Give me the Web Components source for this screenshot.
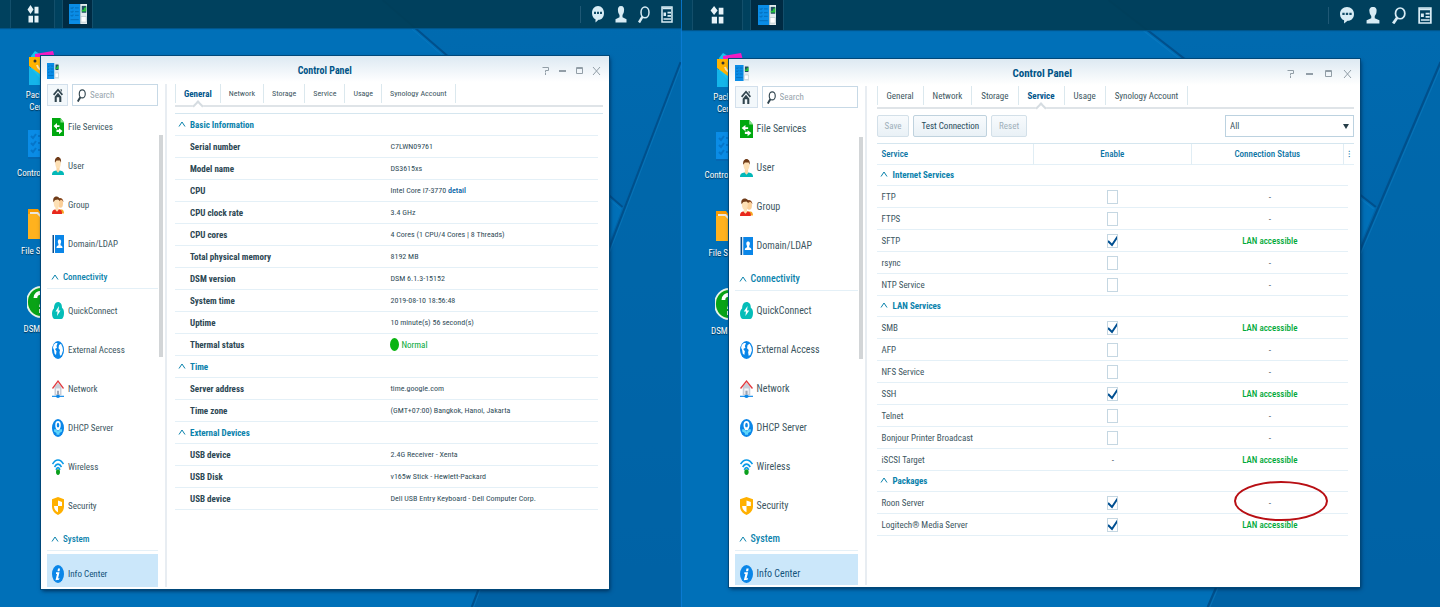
<!DOCTYPE html>
<html lang="en">
<head>
<meta charset="utf-8">
<title>Control Panel</title>
<style>
  body {
    margin: 0;
    height: 100vh;
    display: flex;
    overflow: hidden;
    font-family: "Roboto Condensed", "Open Sans", sans-serif;
    color: #3c5661;
  }
  #info {
    flex: 681;
    --text: 8px;
    --strong: 9px;
    --nav-text: 9px;
    --title: 10px;
    --bar: 28px;
    --launch: 45px;
    --app: 31px;
    --icon: 12px;
    --nav-icon: 12px;
    --tray-gap: 11px;
    --icons-width: 82px;
    --margin: 28px 72px 18px 41px;
    --side: 111px;
    --home: 21px;
    --group-gap: 2px;
    --head: 27px;
    --tab-pad: 8px;
    --control-gap: 8px;
    --main-gap: 8px;
  }
  #services {
    flex: 759;
    --text: 9px;
    --strong: 9px;
    --nav-text: 10px;
    --title: 11px;
    --bar: 30px;
    --launch: 51px;
    --app: 34px;
    --icon: 14px;
    --nav-icon: 13px;
    --tray-gap: 12px;
    --icons-width: 94px;
    --margin: 29px 80px 20px 47px;
    --side: 123px;
    --home: 23px;
    --group-gap: 0px;
    --head: 26px;
    --tab-pad: 9px;
    --control-gap: 10px;
    --main-gap: 10px;
    border-left: 1px solid #0a7ad2;
  }
</style>
</head>
<body>

<dsm-desktop id="info">
  <dsm-window>
    <dsm-tabs slot="tabs" active="General"></dsm-tabs>
    <dsm-info></dsm-info>
  </dsm-window>
</dsm-desktop>

<dsm-desktop id="services">
  <dsm-window>
    <dsm-tabs slot="tabs" active="Service"></dsm-tabs>
    <dsm-services></dsm-services>
  </dsm-window>
</dsm-desktop>

<script>
const icons = {
  menu: `<path fill="#e6f2f8" d="M7 0 13 8 7 16 1 8zM15 3h8v12h-8zM3 19h9v12H3zM15 19h8v12h-8z"/>`,
  panel: `<path fill="#0a8ce6" d="M0 0h15v32H0z"/><path fill="#e3ebee" d="M15 0h9v32h-9z"/><path stroke="#0574c4" stroke-width="2" fill="none" d="M2 6l2 1 2-2M8 6h5M2 12l2 1 2-2M8 12h5M2 18l2 1 2-2M8 18h5M2 25h11"/><path fill="#fff" stroke="#b4c6cd" d="M16 20h7v9h-7z"/><path fill="#1e4c63" d="M17 3h6v11h-6z"/><path fill="#27c43a" d="M17 9h3V6h2V4h1v8h-6z"/>`,
  chat: `<path fill="#d8ecf5" d="M12 0C5 0 0 6 0 13c0 6 3 10 7 12v6l6-5c7 0 11-6 11-13S19 0 12 0z"/><path fill="#124c68" d="M4 11h4v4H4zM10 11h4v4h-4zM16 11h4v4h-4z"/>`,
  person: `<path fill="#d8ecf5" d="M12 0c-5 0-7 4-6 9 0 4 2 6 3 8v4L1 25v6h22v-6l-8-4v-4c1-2 3-4 3-8 1-5-1-9-6-9z"/>`,
  search: `<ellipse cx="14" cy="12" rx="8" ry="10" fill="none" stroke="currentColor" stroke-width="3"/><path stroke="currentColor" stroke-width="5" d="M9 20 2 31"/>`,
  widget: `<path fill="none" stroke="#d8ecf5" stroke-width="3" d="M2 2h20v28H2z"/><path fill="#d8ecf5" d="M3 3h18v3H3zM5 12h5v7H5zM13 11h7v3h-7zM13 17h7v3h-7zM5 23h15v3H5z"/>`,
  home: `<path fill="#30444e" d="M12 1 24 14l-3 3-9-10-9 10-3-3zM18 3h3v6l-3-4z"/><path fill="#30444e" d="m12 11 8 9v12h-5V21H9v11H4V20z"/>`,
  file: `<path fill="#00a80f" d="M0 0h17l7 8v24H0z"/><path fill="#87e08b" d="M17 0v8h7z"/><path fill="#fff" d="m3 14 7-5v4h5v3h-5v4zM21 23l-7-5v3H9v4h5v4z"/>`,
  user: `<path fill="#03b8b8" d="M0 32c0-6 3-7 8-8h8c5 1 8 2 8 8z"/><path fill="#fbd6a4" d="M9 17h6v8l-3 3-3-3z"/><ellipse cx="12" cy="11" rx="5.500" ry="9" fill="#fde0b5"/><path fill="#6f3b18" d="M6 10C5 4 8 0 12 0s7 4 6 10l-2-4H9z"/>`,
  group: `<path fill="#f5a623" d="M13 24h7c3 1 4 4 4 7H13z"/><ellipse cx="17" cy="13" rx="5" ry="8" fill="#fbcf98"/><path fill="#8a4a20" d="M11 8C12 2 22 1 23 11l-3-4z"/><path fill="#e8281c" d="M0 32c0-6 3-8 7-8h6c5 0 7 2 7 8z"/><path fill="#fde0b5" d="M7 17h6v8l-3 3-3-3z"/><ellipse cx="9" cy="12" rx="5.500" ry="9" fill="#fde0b5"/><path fill="#6f3b18" d="M3 11C1 4 5 1 9 1s8 4 7 8l-4-3-6 1z"/>`,
  domain: `<path fill="#0a4d8c" d="M1 0h3v32H1z"/><path fill="#0a86e8" d="M6 0h18v32H6z"/><path fill="#fff" d="M15 8c-4 0-4 5-2 8v2c-3 1-4 2-4 5h12c0-3-1-4-4-5v-2c2-3 2-8-2-8z"/>`,
  quick: `<path fill="#05bdb8" d="M12 0c5 0 8 4 8 10 3 2 4 5 4 9 0 6-2 11-5 11H5c-3 0-5-4-5-10 0-4 2-7 4-9C4 5 7 0 12 0z"/><path fill="#fff" d="m14 7-7 10h4l-1 8 7-10h-4z"/>`,
  globe: `<ellipse cx="12" cy="16" rx="12" ry="16" fill="#0a86e8"/><path fill="#fff" d="M3 8c3-5 6-5 8-4l-2 5 1 3-4 2 3 4-1 7-3-3-1-6-2-4zM14 7l4-2 3 6 1 6-3 8-3 1-1-6 1-4-3-3z"/>`,
  network: `<path fill="#c9ced8" d="M5 12 12 5l7 7v15H5z"/><path fill="#f5f5f8" d="M8 15h8v10H8z"/><path fill="#9aa3b3" d="M10 19h4v7h-4z"/><path fill="none" stroke="#e23a3f" stroke-width="2.500" d="M1 15 12 2l11 13"/><path fill="#0a86e8" d="M0 28h24v2H0z"/><ellipse cx="12" cy="29" rx="4" ry="3" fill="#0a86e8"/>`,
  dhcp: `<ellipse cx="12" cy="16" rx="12" ry="16" fill="#0a86e8"/><ellipse cx="12" cy="11" rx="4" ry="6" fill="none" stroke="#fff" stroke-width="3"/><path fill="#fff" d="M9 15h6v5H9z"/><path fill="#5ed5fa" d="M4 18h4l4 4 4-4h4v4l-5 3v3H9v-3l-5-3z"/>`,
  wifi: `<g fill="none" stroke="#0a9ae8" stroke-width="3"><path d="M1 11C7 1 17 1 23 11M5 16c4-7 10-7 14 0M8 21c2-5 6-5 8 0"/></g><ellipse cx="12" cy="25" rx="4" ry="5" fill="#0aa01c"/>`,
  shield: `<path fill="#ffb000" d="m12 0 12 4v13c0 7-5 12-12 15C5 29 0 24 0 17V4z"/><path fill="#fff" d="M12 6v10h8V9zM4 16h8v11c-5-2-8-6-8-11z"/>`,
  info: `<ellipse cx="12" cy="16" rx="12" ry="16" fill="#0a86e8"/><path fill="#fff" d="M12 6h4l-1 5h-4zM8 13h7l-3 11 3-1-1 3-7 1 3-11H8z"/>`,
  bag: `<path fill="#18c3ef" d="M4 5 8 0l8 5v27H4z"/><path fill="#f51cc4" d="m8 3 18-3 2 7H8z"/><path fill="#ffb300" d="M2 6h26v28L2 15z"/><path fill="#14b5ea" d="M2 15l17 19H2z"/><circle cx="8" cy="10" r="1.500" fill="#333"/><path fill="none" stroke="#fbe3b0" stroke-width="2" d="M10 14c2 6 8 8 14 5"/>`,
  list: `<path fill="#0a8ce6" d="M1 1h27v29H1z"/><path stroke="#0575c9" stroke-width="2" fill="none" d="m4 7 2 2 3-4M11 7h8M4 14l2 2 3-4M11 14h8M4 21l2 2 3-4M11 21h8"/><path stroke="#0467b1" stroke-width="2" d="M1 29h27"/>`,
  folder: `<path fill="#f79a00" d="M1 2h10l3 4h14v25H1z"/><path fill="#ece7df" d="M3 5h8l3 3h14v4H3z"/><path fill="#ffb21e" d="M1 7h9l3 3h15v22H1z"/>`,
  help: `<circle cx="17" cy="16" r="15" fill="#09a316" stroke="#e8f4e8" stroke-width="2"/><path fill="none" stroke="#fff" stroke-width="4" d="M11 12c0-7 12-7 12 0 0 5-6 4-6 9M17 23v4"/>`
};

// every glyph is drawn in one box and stretched to the width of its place
const icon = (name, box = "0 0 24 32") =>
  `<svg viewBox="${box}" preserveAspectRatio="none" aria-hidden="true">${icons[name]}</svg>`;

const chevron = `<svg class="chevron" width="8" height="6" viewBox="0 0 8 6" aria-hidden="true"><path fill="none" stroke="currentColor" d="M1 5.500 4 1l3 4.500"/></svg>`;

/**
 * Wallpaper, taskbar and shortcuts; the window comes through the slot
 */
const desktopTemplate = document.createElement("template");
desktopTemplate.innerHTML = /*html*/ `
<style>
  :host {
    display: flex;
    flex-direction: column;
    position: relative;
    min-width: 0;
    box-sizing: border-box;
    background: #0070b8;
  }
  .wallpaper {
    position: absolute;
    inset: 0;
    width: 100%;
    height: 100%;
  }
  header {
    position: relative;
    display: flex;
    align-items: center;
    height: var(--bar);
    padding: 0 8px 0 10px;
    background: rgba(0, 62, 88, 0.95);
    box-shadow: 0 1px 1px #00568c;
  }
  button {
    border: 0;
    padding: 0;
    background: none;
    color: inherit;
    display: flex;
    justify-content: center;
    align-items: center;
  }
  header .task {
    height: 100%;
    background: #003a54;
    border: solid #134f6b;
    border-width: 0 1px;
    box-sizing: border-box;
  }
  .launch { width: var(--launch); margin-right: 7px; }
  header .app { width: var(--app); background: #002b43; }
  .launch svg { width: var(--icon); height: 18px; }
  .app svg { width: 18px; height: 20px; }
  .tray {
    display: flex;
    gap: var(--tray-gap);
    margin-left: auto;
    padding-left: 11px;
    color: #d8ecf5;
    border-left: 1px solid #1f5875;
  }
  .tray svg { width: var(--icon); height: 17px; }
  .workspace {
    position: relative;
    flex: 1;
    min-height: 0;
    display: flex;
  }
  .shortcuts {
    position: absolute;
    top: 23px;
    left: 0;
    width: var(--icons-width);
    display: flex;
    flex-direction: column;
    align-items: center;
    color: #fff;
    font-size: 9px;
    line-height: 12px;
    text-align: center;
    text-shadow: 0 1px 1px #00304f;
  }
  .shortcuts div { height: 78px; width: 48px; }
  .shortcuts svg { display: block; width: 28px; height: 34px; margin: 0 auto 4px; }
  slot { display: flex; flex: 1; min-width: 0; }
</style>

<svg class="wallpaper" viewBox="0 0 681 607" preserveAspectRatio="none" aria-hidden="true">
  <defs>
    <linearGradient id="shade" x1="0" y1="0" x2="0" y2="1">
      <stop offset="0" stop-color="#006bb0"/>
      <stop offset="1" stop-color="#005ca0"/>
    </linearGradient>
  </defs>
  <path fill="url(#shade)" d="M383 0 623 207 472 607H681V0z"/>
  <path fill="#0068a9" d="M681 62 623 208 472 607H681z" opacity=".5"/>
  <path fill="none" stroke="#00508c" stroke-width="2" d="M383 0 623 207M681 62 472 607"/>
  <path fill="none" stroke="#1080c4" d="M381 2 621 209M683 62 474 607" opacity=".5"/>
</svg>
<header>
  <button class="task launch" aria-label="Main Menu">${icon("menu")}</button>
  <button class="task app" aria-label="Control Panel">${icon("panel")}</button>
  <div class="tray">
    <button aria-label="Notifications">${icon("chat")}</button>
    <button aria-label="Options">${icon("person")}</button>
    <button aria-label="Search">${icon("search")}</button>
    <button aria-label="Widgets">${icon("widget")}</button>
  </div>
</header>
<div class="workspace">
  <div class="shortcuts">
    <div>${icon("bag", "0 0 28 34")}Package Center</div>
    <div>${icon("list", "0 0 28 34")}Control Panel</div>
    <div>${icon("folder", "0 0 28 34")}File Station</div>
    <div>${icon("help", "2 -1 30 34")}DSM Help</div>
  </div>
  <slot></slot>
</div>
`;

class DsmDesktop extends HTMLElement {
  connectedCallback() {
    this.attachShadow({ mode: "open" }).appendChild(desktopTemplate.content.cloneNode(true));
  }
}

/**
 * Control Panel window
 */
const windowTemplate = document.createElement("template");
windowTemplate.innerHTML = /*html*/ `
<style>
  :host {
    position: relative;
    display: flex;
    flex-direction: column;
    flex: 1;
    min-width: 0;
    min-height: 0;
    box-sizing: border-box;
    margin: var(--margin);
    padding: 1px 6px 2px;
    background: #fff linear-gradient(#dde9f2, #fff 26px) no-repeat;
    box-shadow: 0 0 0 1px #00487a, 1px 2px 4px #00305a;
  }
  header {
    display: flex;
    align-items: center;
    height: var(--head);
    box-sizing: border-box;
    color: #005487;
  }
  header > svg { width: var(--icon); height: 16px; }
  h1 { flex: 1; margin: 0; font-size: var(--title); text-align: center; padding-left: 50px; }
  .controls { display: flex; gap: var(--control-gap); padding-right: 2px; }
  .controls button { border: 0; padding: 0; background: none; display: flex; }
  .body { flex: 1; display: flex; min-height: 0; }
  aside {
    width: calc(var(--side) + 7px);
    display: flex;
    flex-direction: column;
    border-right: 2px solid #e8edf2;
    margin-right: var(--main-gap);
    flex: none;
    min-height: 0;
  }
  .find { display: flex; gap: 4px; width: var(--side); height: 22px; flex: none; }
  .find button {
    width: var(--home);
    padding: 0;
    border: 1px solid #d3e0ec;
    background: #f3f8fb;
    display: flex;
    align-items: center;
    justify-content: center;
    flex: none;
  }
  .find button svg { width: 10px; height: 14px; }
  .find label {
    flex: 1;
    min-width: 0;
    display: flex;
    align-items: center;
    gap: 4px;
    padding-left: 4px;
    border: 1px solid #c7d9e6;
    color: #30444e;
  }
  .find label svg { width: 9px; height: 13px; flex: none; }
  .find input {
    width: 100%;
    min-width: 0;
    padding: 0;
    border: 0;
    outline: 0;
    background: none;
    font: inherit;
    font-size: 9px;
  }
  .find input::placeholder { color: #98a5ad; }
  .scroll { display: flex; flex: 1; min-height: 0; margin-top: 1px; }
  nav { width: var(--side); overflow: hidden; }
  nav a {
    height: 39px;
    display: flex;
    align-items: center;
    gap: 4px;
    padding-left: 5px;
    color: #3c5661;
    font-size: var(--nav-text);
    text-decoration: none;
  }
  nav a svg { width: var(--nav-icon); height: 18px; }
  nav a.current { background: #cbe7fa; color: #12537a; margin-top: 3px; }
  nav h2 {
    height: 26px;
    box-sizing: border-box;
    margin: 0 0 var(--group-gap);
    padding: 2px 0 0 4px;
    display: flex;
    align-items: center;
    gap: 4px;
    border-bottom: 1px solid #e4f0f7;
    color: #0a82ac;
    font-size: var(--nav-text);
    font-weight: 500;
  }
  .bar { width: 4px; height: 222px; margin: 28px 0 0 1px; background: #d2d5d7; }
  main { flex: 1; min-width: 0; }
</style>

<header>
  ${icon("panel")}
  <h1>Control Panel</h1>
  <div class="controls">
    <button aria-label="Help"><svg width="9" height="9" fill="none" stroke="#929ea7"><path d="M1.500 1.500h6v3h-3v2M4.500 7v2"/></svg></button>
    <button aria-label="Minimize"><svg width="9" height="9" fill="#929ea7"><path d="M1 4h7v2H1z"/></svg></button>
    <button aria-label="Maximize"><svg width="9" height="9" fill="none" stroke="#929ea7"><path d="M1.500 1.500h6v6h-6zM1 2.500h7"/></svg></button>
    <button aria-label="Close"><svg width="9" height="9" stroke="#929ea7"><path d="m1 1 7 8M8 1 1 9"/></svg></button>
  </div>
</header>
<div class="body">
  <aside>
    <div class="find">
      <button aria-label="Home">${icon("home")}</button>
      <label>${icon("search")}<input type="text" placeholder="Search" aria-label="Search"></label>
    </div>
    <div class="scroll">
      <nav>
        <a href="#">${icon("file")}File Services</a>
        <a href="#">${icon("user")}User</a>
        <a href="#">${icon("group")}Group</a>
        <a href="#">${icon("domain")}Domain/LDAP</a>
        <h2>${chevron}Connectivity</h2>
        <a href="#">${icon("quick")}QuickConnect</a>
        <a href="#">${icon("globe")}External Access</a>
        <a href="#">${icon("network")}Network</a>
        <a href="#">${icon("dhcp")}DHCP Server</a>
        <a href="#">${icon("wifi")}Wireless</a>
        <a href="#">${icon("shield")}Security</a>
        <h2>${chevron}System</h2>
        <a href="#" class="current">${icon("info")}Info Center</a>
      </nav>
      <div class="bar"></div>
    </div>
  </aside>
  <main>
    <slot name="tabs"></slot>
    <slot></slot>
  </main>
</div>
`;

class DsmWindow extends HTMLElement {
  connectedCallback() {
    this.attachShadow({ mode: "open" }).appendChild(windowTemplate.content.cloneNode(true));
  }
}

/**
 * Tab strip, "active" names the open tab
 */
class DsmTabs extends HTMLElement {
  connectedCallback() {
    const tabs = ["General", "Network", "Storage", "Service", "Usage", "Synology Account"];
    const active = this.getAttribute("active");
    this.attachShadow({ mode: "open" }).innerHTML = /*html*/ `
      <style>
        :host { display: block; border-bottom: 2px solid #dfe4e8; }
        div {
          display: flex;
          height: 21px;
        }
        button {
          position: relative;
          height: 19px;
          padding: 0 var(--tab-pad);
          border: 0;
          border-right: 1px solid #dbe8ee;
          background: none;
          color: #3c5661;
          font: inherit;
          font-size: var(--text);
        }
        button:first-child { border-left: 1px solid #dbe8ee; }
        .active { color: #00568c; font-weight: bold; font-size: var(--strong); }
        .active::after {
          content: "";
          position: absolute;
          left: calc(50% - 4px);
          top: 18px;
          width: 6px;
          height: 6px;
          background: #fff;
          border: solid #d5dce1;
          border-width: 2px 0 0 2px;
          transform: rotate(45deg);
        }
      </style>
      <div role="tablist">${tabs
        .map((t) => `<button role="tab" aria-selected="${t === active}" class="${t === active ? "active" : ""}">${t}</button>`)
        .join("")}</div>`;
  }
}

/**
 * General tab
 */
class DsmInfo extends HTMLElement {
  connectedCallback() {
    const groups = [
      ["Basic Information", [
        ["Serial number", "C7LWN09761"],
        ["Model name", "DS3615xs"],
        ["CPU", `Intel Core i7-3770 <a href="#">detail</a>`],
        ["CPU clock rate", "3.4 GHz"],
        ["CPU cores", "4 Cores (1 CPU/4 Cores | 8 Threads)"],
        ["Total physical memory", "8192 MB"],
        ["DSM version", "DSM 6.1.3-15152"],
        ["System time", "2019-08-10 18:56:48"],
        ["Uptime", "10 minute(s) 56 second(s)"],
        ["Thermal status", `<span class="ok"><i></i>Normal</span>`]
      ]],
      ["Time", [
        ["Server address", "time.google.com"],
        ["Time zone", "(GMT+07:00) Bangkok, Hanoi, Jakarta"]
      ]],
      ["External Devices", [
        ["USB device", "2.4G Receiver - Xenta"],
        ["USB Disk", "v165w Stick - Hewlett-Packard"],
        ["USB device", "Dell USB Entry Keyboard - Dell Computer Corp."]
      ]]
    ];
    this.attachShadow({ mode: "open" }).innerHTML = /*html*/ `
      <style>
        :host { display: block; margin-top: 6px; padding-right: 5px; border-top: 1px solid #d5e6ef; }
        table { width: 100%; border-collapse: separate; border-spacing: 0; table-layout: fixed; font-size: var(--text); }
        th, td {
          height: 21px;
          padding: 0;
          border-bottom: 1px solid #e4f0f7;
          text-align: left;
          line-height: 12px;
        }
        td { color: #2f4c58; }
        th { color: #2c4753; font-size: var(--strong); }
        .row th { padding-left: 15px; }
        .group th { color: #0a82ac; padding-left: 3px; }
        .group .chevron { margin-right: 4px; vertical-align: 1px; }
        a { color: #0060a4; font-weight: 500; text-decoration: none; }
        .ok { display: flex; align-items: center; gap: 2px; color: #00a838; font-size: var(--strong); }
        i { width: 9px; height: 13px; border-radius: 50%; background: #09b412; }
      </style>
      <table>
        <colgroup><col style="width: 51%"><col></colgroup>
        ${groups.map(([name, rows]) => `
          <tr class="group"><th colspan="2">${chevron}${name}</th></tr>
          ${rows.map(([k, v]) => `<tr class="row"><th scope="row">${k}</th><td>${v}</td></tr>`).join("")}
        `).join("")}
      </table>`;
  }
}

/**
 * Service tab: "on" and "off" give a tick box, "-" leaves the cell without one
 */
class DsmServices extends HTMLElement {
  connectedCallback() {
    const lan = "LAN accessible";
    const groups = [
      ["Internet Services", [
        ["FTP", "off", "-"],
        ["FTPS", "off", "-"],
        ["SFTP", "on", lan],
        ["rsync", "off", "-"],
        ["NTP Service", "off", "-"]
      ]],
      ["LAN Services", [
        ["SMB", "on", lan],
        ["AFP", "off", "-"],
        ["NFS Service", "off", "-"],
        ["SSH", "on", lan],
        ["Telnet", "off", "-"],
        ["Bonjour Printer Broadcast", "off", "-"],
        ["iSCSI Target", "-", lan]
      ]],
      ["Packages", [
        ["Roon Server", "on", "-", "marked"],
        ["Logitech® Media Server", "on", lan]
      ]]
    ];
    const box = (name, value) => value === "-" ? "-" :
      `<input type="checkbox" aria-label="${name}" ${value === "on" ? "checked" : ""}>`;
    this.attachShadow({ mode: "open" }).innerHTML = /*html*/ `
      <style>
        :host { display: block; font-size: var(--text); }
        .tools { display: flex; gap: 4px; height: 22px; margin: 6px 0; }
        button {
          padding: 0 7px;
          border: 1px solid #bfd2de;
          border-radius: 2px;
          background: linear-gradient(#f8fbfd, #e9f1f6);
          color: #274b5c;
          font: inherit;
        }
        button:disabled { color: #9fb0ba; border-color: #d3e0e9; }
        select {
          appearance: none;
          width: 27%;
          margin-left: auto;
          padding: 0 4px;
          border: 1px solid #bcd2e0;
          border-radius: 0;
          background: #fff url("data:image/svg+xml,%3Csvg xmlns='http://www.w3.org/2000/svg' width='6' height='5'%3E%3Cpath fill='%23263d48' d='M0 0h6L3 5z'/%3E%3C/svg%3E") no-repeat right 4px center;
          color: #3c5661;
          font: inherit;
        }
        table { width: 100%; border-collapse: separate; border-spacing: 0; table-layout: fixed; border-top: 1px solid #d5e6ef; }
        th, td {
          height: 21px;
          padding: 0;
          border-bottom: 1px solid #e4f0f7;
          line-height: 12px;
          text-align: center;
        }
        th { color: #0a74a4; font-weight: 500; height: 20px; }
        thead th { border-right: 1px solid #e0edf4; }
        thead th:last-child { border-right: 0; }
        th:first-child, td:first-child { text-align: left; padding-left: 5px; }
        .group th { color: #0a82ac; font-weight: bold; padding-left: 3px; }
        .group .chevron { margin-right: 5px; vertical-align: 1px; }
        tbody td:last-child { border: 0; }
        .lan { color: #00a93a; font-weight: 500; }
        input {
          appearance: none;
          display: block;
          width: 11px;
          height: 14px;
          margin: 0 auto;
          border: 1px solid #c5d7e2;
          background: #fff;
        }
        input:checked {
          background: url("data:image/svg+xml,%3Csvg xmlns='http://www.w3.org/2000/svg' width='11' height='14'%3E%3Cpath fill='none' stroke='%23004f91' stroke-width='2' d='m1 7 4 4 6-9'/%3E%3C/svg%3E") no-repeat border-box;
        }
        .marked { position: relative; }
        .marked::after {
          content: "";
          position: absolute;
          left: calc(50% - 36px);
          top: -11px;
          width: 90px;
          height: 36px;
          border: 2px solid #b80f14;
          border-radius: 50%;
        }
      </style>
      <div class="tools">
        <button disabled>Save</button>
        <button>Test Connection</button>
        <button disabled>Reset</button>
        <select aria-label="Filter"><option>All</option></select>
      </div>
      <table>
        <colgroup><col style="width: 33%"><col style="width: 33%"><col><col style="width: 4px"><col style="width: 6px"></colgroup>
        <thead><tr><th>Service</th><th>Enable</th><th>Connection Status</th><th colspan="2">⁝</th></tr></thead>
        <tbody>
        ${groups.map(([name, rows]) => `
          <tr class="group"><th colspan="4">${chevron}${name}</th><td></td></tr>
          ${rows.map(([s, on, status, mark]) => `
            <tr><td>${s}</td><td>${box(s, on)}</td>
            <td colspan="2" class="${mark || ""} ${status === lan ? "lan" : ""}">${status}</td><td></td></tr>`).join("")}
        `).join("")}
        </tbody>
      </table>`;
  }
}

customElements.define("dsm-desktop", DsmDesktop);
customElements.define("dsm-window", DsmWindow);
customElements.define("dsm-tabs", DsmTabs);
customElements.define("dsm-info", DsmInfo);
customElements.define("dsm-services", DsmServices);
</script>
</body>
</html>
